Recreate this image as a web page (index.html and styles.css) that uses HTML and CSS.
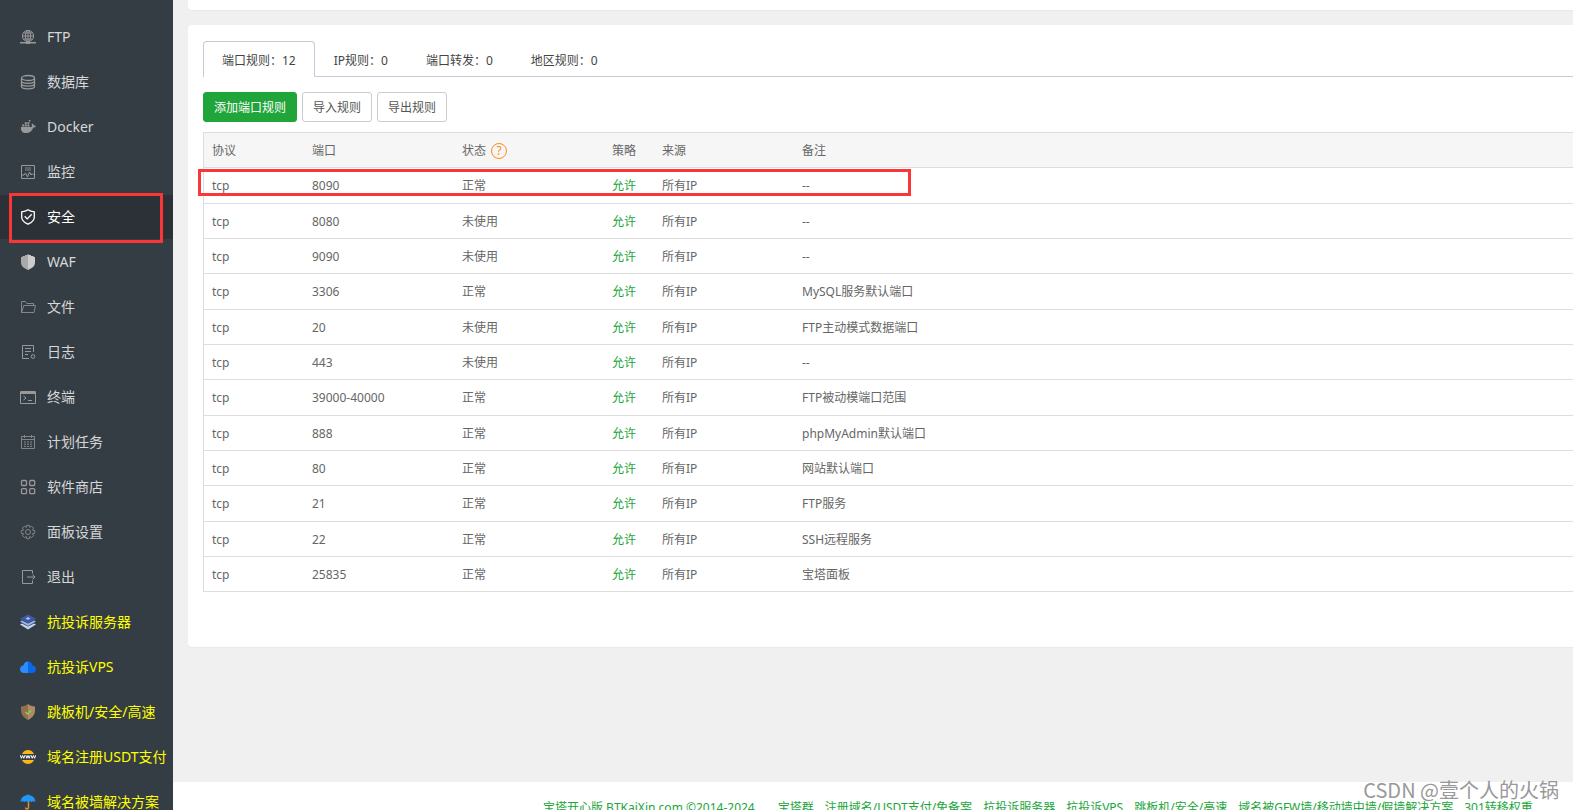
FILE: index.html
```html
<!DOCTYPE html>
<html lang="zh-CN">
<head>
<meta charset="utf-8">
<title>安全 - 端口规则</title>
<link rel="stylesheet" href="styles.css">
</head>
<body>
<div class="shell">
  <nav class="sidebar" aria-label="主菜单">
    <ul class="menu">
      <li><a href="#"><svg class="icon" viewBox="0 0 16 16"><g class="line"><circle cx="8" cy="7" r="5.6"/><ellipse cx="8" cy="7" rx="2.6" ry="5.6"/><path d="M2.500 7h11M8 1.500v12M3.500 4h9M3.500 10h9M.5 13.500h15"/></g><path class="fill" d="M0 13h16v1.500H0zM6 12.500h4V15H6z"/></svg>FTP</a></li>
      <li><a href="#"><svg class="icon" viewBox="0 0 16 16"><g class="line bold"><ellipse cx="8" cy="4" rx="6.5" ry="2.5"/><path d="M1.500 4v8.500c0 1.300 2.900 2.300 6.500 2.300s6.500-1 6.500-2.300V4M1.500 7c0 1.300 2.900 2.300 6.500 2.300s6.500-1 6.500-2.300M1.500 9.800c0 1.300 2.900 2.300 6.500 2.300s6.500-1 6.500-2.300"/></g></svg>数据库</a></li>
      <li><a href="#"><svg class="icon" viewBox="0 0 16 16"><path class="fill" d="M1 8h10.600c.5-.6.400-1.800-.1-2.500l.9-1c1 .6 1.300 1.300 1.400 2 .8-.1 1.500 0 2.100.4-.4 1-1.300 1.500-2.600 1.500C12 12 9.500 14 6 14c-3.600 0-5.300-2-5-6zM2.200 5.600h2v1.800h-2zM4.800 5.600h2v1.800h-2zM7.400 5.600h2v1.800h-2zM4.800 3.200h2V5h-2zM7.400 3.200h2V5h-2zM8.800 1h1.700v1.500H8.800z"/></svg>Docker</a></li>
      <li><a href="#"><svg class="icon" viewBox="0 0 16 16"><g class="line"><path d="M1.500 1.500h13v13h-13zM2 11h2l1.500-2 2 4 2-5 1.500 3 1-1.500 1 1h1"/><path class="dim" d="M5 4h6M5 6h6"/></g></svg>监控</a></li>
      <li class="active"><a href="#" aria-current="page"><svg class="icon" viewBox="0 0 16 16"><path class="line bold" d="M8 .8c2 1.500 4 1.900 6.300 2v5.400c0 3.400-2.900 5.500-6.300 7-3.400-1.500-6.300-3.600-6.300-7V2.800C4 2.700 6 2.300 8 .8zM4.700 7.300l2.500 2.600 4.500-4.600"/></svg>安全</a><span class="mark mark-menu"></span></li>
      <li><a href="#"><svg class="icon" viewBox="0 0 16 16"><path fill="#aaa" d="M1 3h1.500V2H5V1h2V.5h1V16c-4.200-1.800-7-4-7-7.500z"/><path fill="#ccc" d="M15 3h-1.500V2H11V1H9V.5H8V16c4.200-1.800 7-4 7-7.500z"/></svg>WAF</a></li>
      <li><a href="#"><svg class="icon" viewBox="0 0 16 16"><path class="line dim" d="M1.500 13.500v-11h4l1.500 2h6.500v2M1.500 13.500l2.300-7h11.700l-1.500 7z"/></svg>文件</a></li>
      <li><a href="#"><svg class="icon" viewBox="0 0 16 16"><g class="line"><path d="M13.500 8V1.500h-11v13H9M5 4.500h6M5 7.500h6M5 10.500h3"/><circle cx="13" cy="12.500" r="1.800"/></g></svg>日志</a></li>
      <li><a href="#"><svg class="icon" viewBox="0 0 16 16"><path class="line" d="M.5 2.500h15v12H.5zM3.500 7l2.500 2-2.500 2M8 11.500h4"/><path class="fill" d="M1 3h14v2H1z"/></svg>终端</a></li>
      <li><a href="#"><svg class="icon" viewBox="0 0 16 16"><g class="line dim"><path d="M1.500 2.500h13v12h-13zM1.500 5.500h13M4.500 1v3M11.500 1v3"/><path stroke-dasharray="2 1" d="M4 8h8.500M4 10.200h8.500M4 12.400h8.500"/></g></svg>计划任务</a></li>
      <li><a href="#"><svg class="icon" viewBox="0 0 16 16"><g class="line bold"><rect x="1.500" y="1.500" width="5" height="5" rx="1"/><rect x="9.700" y="1.500" width="5" height="5" rx="1"/><rect x="1.500" y="9.700" width="5" height="5" rx="1"/><rect x="9.700" y="9.700" width="5" height="5" rx="1"/></g></svg>软件商店</a></li>
      <li><a href="#"><svg class="icon" viewBox="0 0 16 16"><g class="line dim"><path d="M6.700 1.300h2.600l.4 2 1.900-1.100 2 2-1.200 1.900 2.300.5v2.600l-2.300.5 1.200 1.900-2 2-1.900-1.100-.4 2.200H6.700l-.4-2.200-1.900 1.100-2-2 1.200-1.900-2.300-.5V6.600l2.300-.5-1.200-1.900 2-2 1.900 1.100z"/><circle cx="8" cy="8" r="2.500"/></g></svg>面板设置</a></li>
      <li><a href="#"><svg class="icon" viewBox="0 0 16 16"><path class="line" d="M12.500 4.500v-3h-10v13h10v-3M7 8h8M12.500 5.500L15 8l-2.500 2.500"/></svg>退出</a></li>
      <li class="promo"><a href="#"><svg class="icon" viewBox="0 0 16 16"><path fill="#c4d2f2" d="M0 10.500L2 9.500l6 3 6-3 2 1L8 15.500z"/><path fill="#9db2e6" d="M0 7.500l2-1 6 3 6-3 2 1-8 4.500z"/><path fill="#3f59a8" d="M8 .5l8 4.300-8 4.400L0 4.800z"/><path fill="#a9bcf0" d="M8 3l2.500 1.500L8 6 5.500 4.500z"/></svg>抗投诉服务器</a></li>
      <li class="promo"><a href="#"><svg class="icon" viewBox="0 0 16 16"><path fill="#2a8cff" d="M8 2.500C5.500 2.500 4 4 3.600 6.200 1.500 6.500 0 8 0 10.200 0 12.500 1.700 14 4 14h4z"/><path fill="#0868e8" d="M8 2.500c2.500 0 4 1.500 4.400 3.700C14.500 6.500 16 8 16 10.200 16 12.500 14.300 14 12 14H8z"/></svg>抗投诉VPS</a></li>
      <li class="promo"><a href="#"><svg class="icon" viewBox="0 0 16 16"><path fill="#92704f" d="M8 0v16C4 14 1 11 1 6V2.500C4 2.500 6 1.500 8 0z"/><path fill="#ad8b67" d="M8 0v16c4-2 7-5 7-10V2.500C12 2.500 10 1.500 8 0z"/><path fill="none" stroke="#7fd35a" stroke-width="1.500" d="M5.500 8l2 2L11 6.500"/></svg>跳板机/安全/高速</a></li>
      <li class="promo"><a href="#"><svg class="icon" viewBox="0 0 16 16"><path fill="#fbb515" d="M2 5C3.200 2.600 5.400 1 8 1s4.800 1.600 6 4zM2 11c1.200 2.400 3.400 4 6 4s4.800-1.600 6-4z"/><path fill="none" stroke="#fff" d="M.4 6.300l1 3 1.200-2.800 1.200 2.800 1-3M5.800 6.300l1 3L8 6.500l1.200 2.800 1-3M11.200 6.300l1 3 1.200-2.800 1.200 2.800 1-3"/></svg>域名注册USDT支付</a></li>
      <li class="promo"><a href="#"><svg class="icon" viewBox="0 0 16 16"><path fill="none" stroke="#d9941c" stroke-width="1.500" d="M8.500 7v6.500c0 2-3 2-3 0"/><path fill="#2196f3" d="M.5 8C.8 4 3.500 1.300 7.500 1V0h1v1c4 .3 6.700 3 7 7-1-1-3-1-4 0-1-1-2.200-1-3.500 0-1.300-1-2.500-1-3.500 0-1-1-3-1-4 0z"/></svg>域名被墙解决方案</a></li>
    </ul>
  </nav>
  <div class="main">
    <main class="content">
      <section class="card card-top"></section>
      <section class="card rules">
        <div class="tabs" role="tablist">
          <button type="button" class="tab selected" role="tab" aria-selected="true">端口规则：12</button>
          <button type="button" class="tab" role="tab">IP规则：0</button>
          <button type="button" class="tab" role="tab">端口转发：0</button>
          <button type="button" class="tab" role="tab">地区规则：0</button>
        </div>
        <div class="actions">
          <button type="button" class="btn primary">添加端口规则</button>
          <button type="button" class="btn">导入规则</button>
          <button type="button" class="btn">导出规则</button>
        </div>
        <div class="table-wrap">
          <table class="table">
            <colgroup><col class="w-protocol"><col class="w-port"><col class="w-state"><col class="w-policy"><col class="w-source"><col></colgroup>
            <thead><tr><th>协议</th><th>端口</th><th><span class="state">状态<a class="help" href="#" aria-label="帮助">?</a></span></th><th>策略</th><th>来源</th><th>备注</th></tr></thead>
            <tbody>
              <tr><td>tcp</td><td>8090</td><td>正常</td><td><a href="#">允许</a></td><td>所有IP</td><td>--</td></tr>
              <tr><td>tcp</td><td>8080</td><td>未使用</td><td><a href="#">允许</a></td><td>所有IP</td><td>--</td></tr>
              <tr><td>tcp</td><td>9090</td><td>未使用</td><td><a href="#">允许</a></td><td>所有IP</td><td>--</td></tr>
              <tr><td>tcp</td><td>3306</td><td>正常</td><td><a href="#">允许</a></td><td>所有IP</td><td>MySQL服务默认端口</td></tr>
              <tr><td>tcp</td><td>20</td><td>未使用</td><td><a href="#">允许</a></td><td>所有IP</td><td>FTP主动模式数据端口</td></tr>
              <tr><td>tcp</td><td>443</td><td>未使用</td><td><a href="#">允许</a></td><td>所有IP</td><td>--</td></tr>
              <tr><td>tcp</td><td>39000-40000</td><td>正常</td><td><a href="#">允许</a></td><td>所有IP</td><td>FTP被动模端口范围</td></tr>
              <tr><td>tcp</td><td>888</td><td>正常</td><td><a href="#">允许</a></td><td>所有IP</td><td>phpMyAdmin默认端口</td></tr>
              <tr><td>tcp</td><td>80</td><td>正常</td><td><a href="#">允许</a></td><td>所有IP</td><td>网站默认端口</td></tr>
              <tr><td>tcp</td><td>21</td><td>正常</td><td><a href="#">允许</a></td><td>所有IP</td><td>FTP服务</td></tr>
              <tr><td>tcp</td><td>22</td><td>正常</td><td><a href="#">允许</a></td><td>所有IP</td><td>SSH远程服务</td></tr>
              <tr><td>tcp</td><td>25835</td><td>正常</td><td><a href="#">允许</a></td><td>所有IP</td><td>宝塔面板</td></tr>
            </tbody>
          </table>
          <span class="mark mark-row"></span>
        </div>
      </section>
    </main>
    <footer class="footer">
      <a class="brand" href="#">宝塔开心版 BTKaiXin.com ©2014-2024</a>
      <a href="#">宝塔群</a>
      <a href="#">注册域名/USDT支付/免备案</a>
      <a href="#">抗投诉服务器</a>
      <a href="#">抗投诉VPS</a>
      <a href="#">跳板机/安全/高速</a>
      <a href="#">域名被GFW墙/移动墙中墙/假墙解决方案</a>
      <a href="#">301转移权重</a>
    </footer>
  </div>
  <div class="watermark">CSDN @壹个人的火锅</div>
</div>
</body>
</html>
```

FILE: styles.css
```css
* {
  box-sizing: border-box;
}

body {
  margin: 0;
  overflow: hidden;
  background: #f0f0f0;
  color: #666;
  font: 12px/20px "Noto Sans", "Noto Sans CJK SC", sans-serif;
}

a {
  color: #20a53a;
  text-decoration: none;
}

button {
  font: inherit;
  cursor: pointer;
}

.shell {
  position: relative;
  display: flex;
  height: 100vh;
  overflow: hidden;
}

/* Sidebar */
.sidebar {
  flex: none;
  width: 173px;
  padding-top: 15px;
  background: #353d44;
}

.menu {
  margin: 0;
  padding: 0;
  list-style: none;
}

.menu li {
  position: relative;
  margin-bottom: 1px;
}

.menu a {
  display: flex;
  align-items: center;
  gap: 11px;
  height: 44px;
  padding-left: 20px;
  color: #d6d7d9;
  font-size: 14px;
  white-space: nowrap;
}

.menu .active a {
  background: #2c3138;
  color: #fff;
}

.menu .promo a {
  color: #ff0;
}

.icon {
  flex: none;
  width: 16px;
  height: 16px;
  color: #999;
}

.active .icon {
  color: #fff;
}

.line {
  fill: none;
  stroke: currentColor;
}

.bold {
  stroke-width: 1.3;
}

.fill {
  fill: currentColor;
}

.dim {
  opacity: 0.8;
}

/* Red highlight frames */
.mark {
  position: absolute;
  border: 3px solid #fb3636;
  pointer-events: none;
}

.mark-menu {
  top: -2px;
  right: 10px;
  bottom: -4px;
  left: 9px;
  z-index: 1;
}

.mark-row {
  top: 37px;
  left: -5px;
  width: 713px;
  height: 27px;
}

/* Content */
.main {
  display: flex;
  flex: 1;
  flex-direction: column;
  min-width: 0;
}

.content {
  flex: 1;
  padding-left: 15px;
}

.card {
  background: #fff;
  box-shadow: 0 1px 1px #e8e8e8;
}

.card-top {
  height: 10px;
  margin-bottom: 15px;
  border-radius: 0 0 0 4px;
}

.rules {
  padding: 16px 0 55px 15px;
  border-radius: 4px 0 0 4px;
}

.tabs {
  display: flex;
  height: 36px;
  box-shadow: inset 0 -1px #c8c8d6;
}

.tab {
  padding: 0 18px;
  border: 1px solid transparent;
  border-bottom: 0;
  background: none;
  color: #444;
  line-height: 38px;
}

.tab.selected {
  border-color: #c8c8d6;
  border-radius: 4px 4px 0 0;
  background: #fff;
}

.actions {
  display: flex;
  gap: 5px;
  margin: 15px 0 10px;
}

.btn {
  height: 30px;
  padding: 2px 10px 0;
  border: 1px solid #ccc;
  border-radius: 3px;
  background: #fff;
  color: #555;
}

.btn.primary {
  border-color: #20a53a;
  background: #20a53a;
  color: #fff;
}

.table-wrap {
  position: relative;
}

.table {
  width: 100%;
  border: solid #ddd;
  border-width: 1px 0 0 1px;
  border-spacing: 0;
  table-layout: fixed;
}

.table th,
.table td {
  height: 35px;
  padding: 1px 8px 0;
  border-bottom: 1px solid #ddd;
  font-weight: 400;
  text-align: left;
  white-space: nowrap;
}

.table th {
  background: #f6f6f6;
}

.table tbody tr:nth-child(3n + 1) td {
  height: 36px;
}

.w-protocol {
  width: 100px;
}

.w-port,
.w-state {
  width: 150px;
}

.w-policy {
  width: 50px;
}

.w-source {
  width: 140px;
}

.state {
  display: flex;
  align-items: center;
  gap: 5px;
}

.help {
  width: 16px;
  height: 16px;
  border: 1px solid #ff8c1a;
  border-radius: 50%;
  color: #ff8c1a;
  line-height: 14px;
  text-align: center;
}

/* Footer */
.footer {
  display: flex;
  gap: 11px;
  height: 28px;
  padding: 16px 0 0 370px;
  overflow: hidden;
  background: #fff;
  white-space: nowrap;
}

.brand {
  margin-right: 12px;
}

.watermark {
  position: absolute;
  right: 14px;
  bottom: 6px;
  color: #999;
  font: 400 20px/28px "Noto Sans CJK SC", sans-serif;
}
```
